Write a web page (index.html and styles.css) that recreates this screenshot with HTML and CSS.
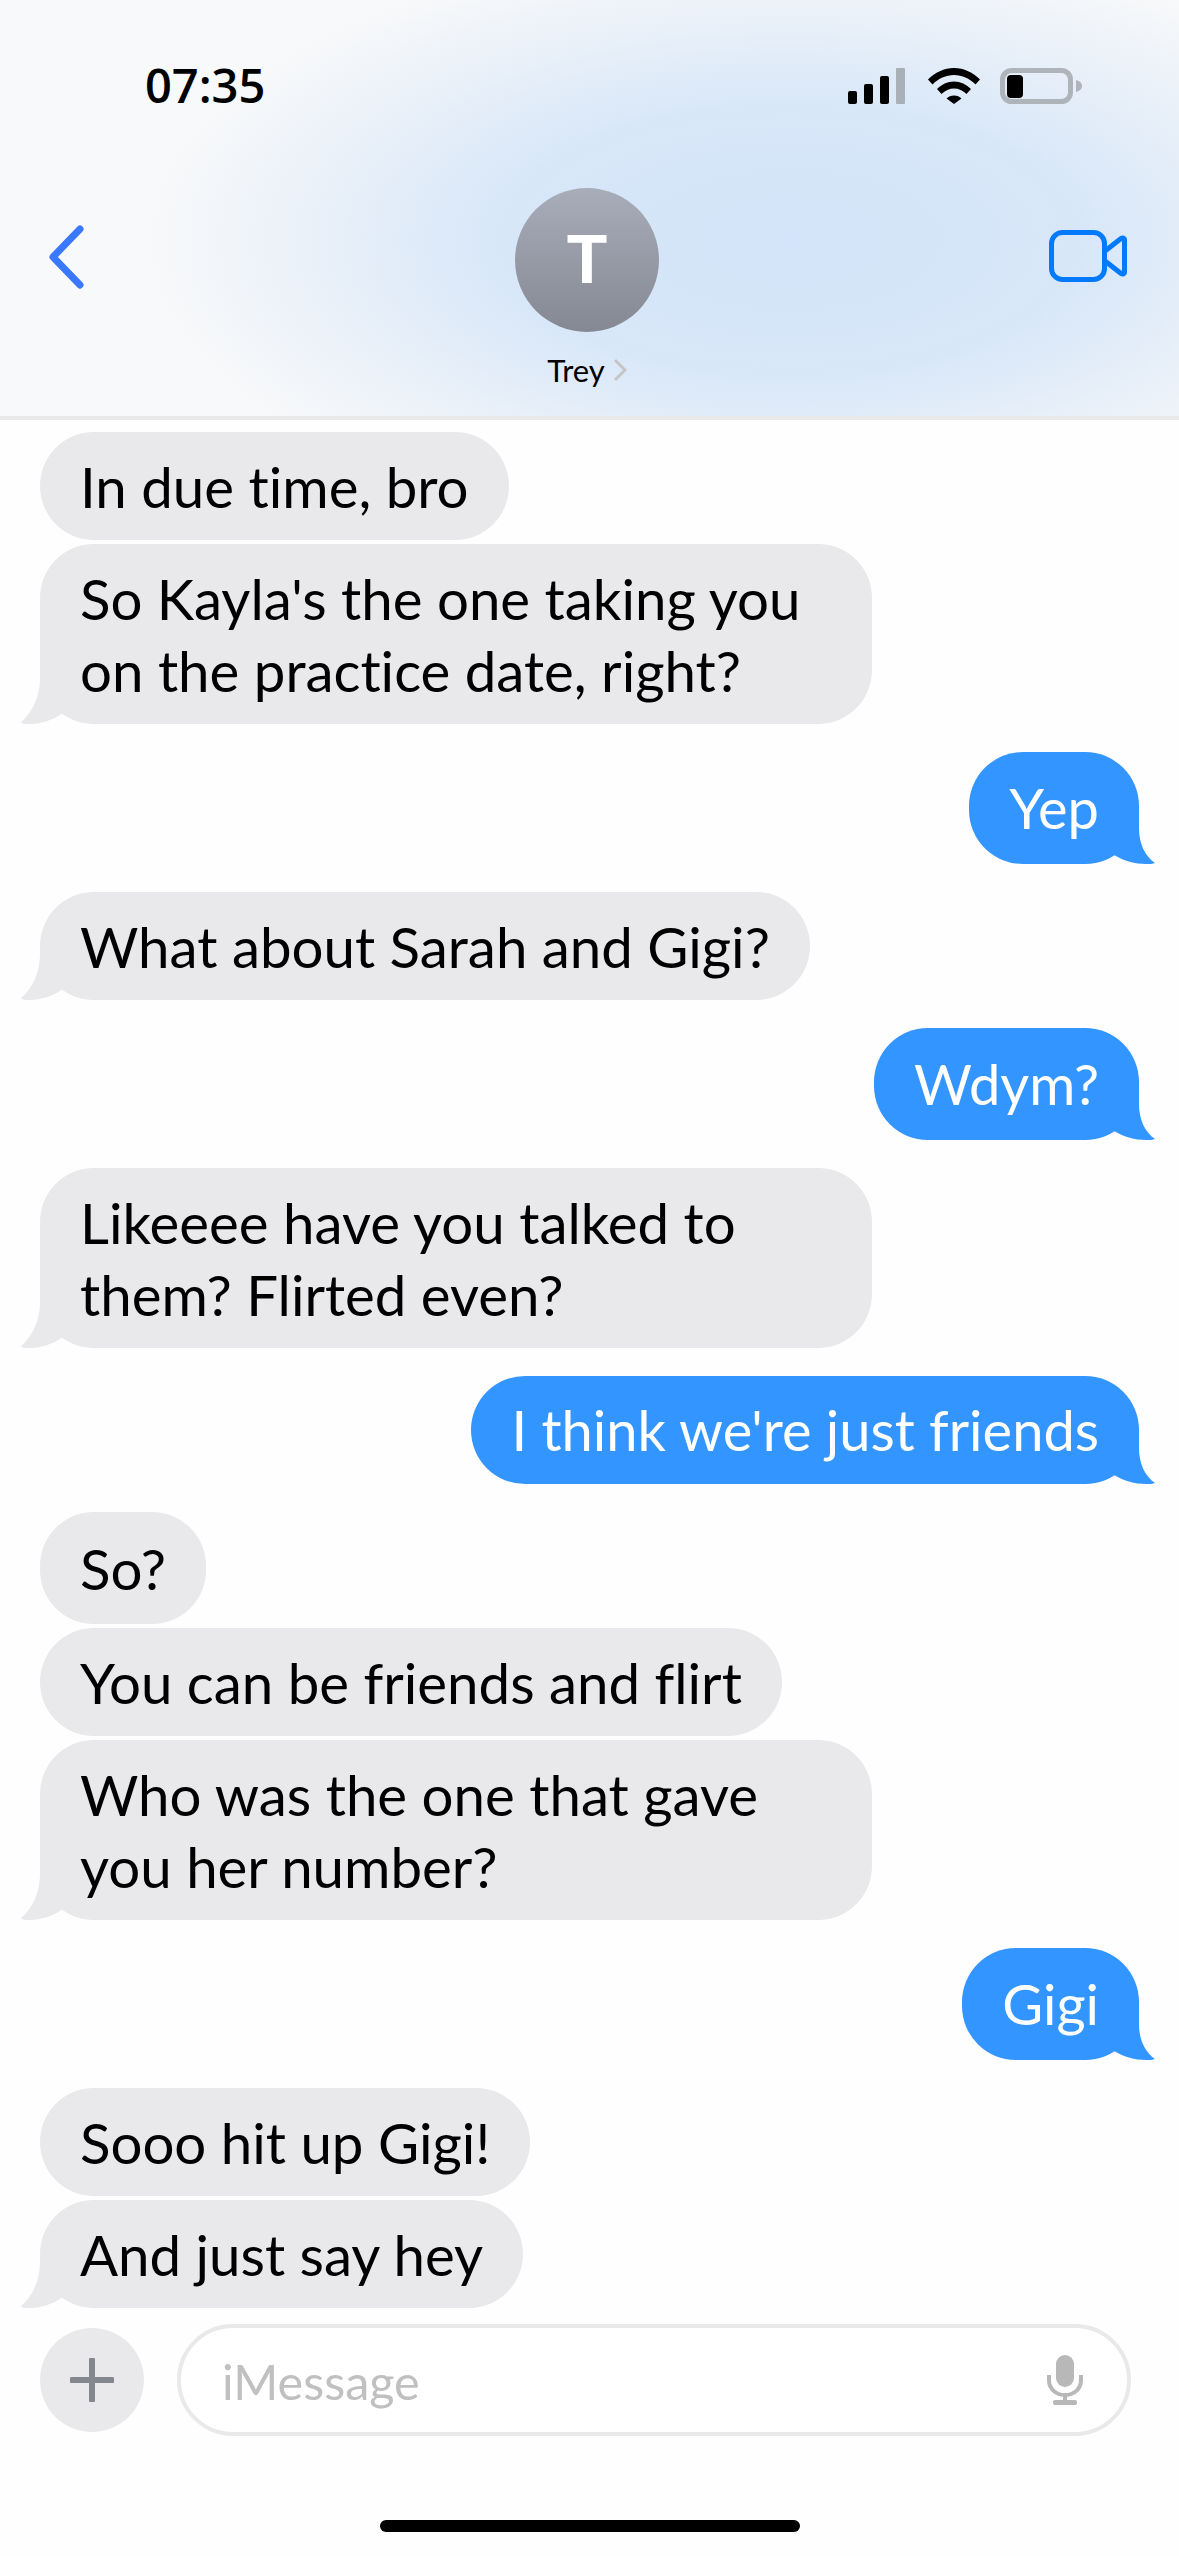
FILE: index.html
```html
<!doctype html>
<html lang="en">

<head>
    <meta charset="UTF-8" />
    <meta name="viewport" content="width=device-width, initial-scale=1.0" />
    <title>Trey</title>
    <link rel="stylesheet" href="styles.css">
</head>

<body>
    <header class="header">
        <div class="status">
            <span class="status__time">07:35</span>
            <div class="status__icons">
                <svg class="signal" width="58" height="36" viewBox="0 0 58 36">
                    <rect x="0" y="23" width="9" height="13" rx="2" />
                    <rect x="16" y="16" width="9" height="20" rx="2" />
                    <rect x="32" y="8" width="9" height="28" rx="2" />
                    <rect class="signal__off" x="48" y="0" width="9" height="36" rx="1" />
                </svg>
                <svg class="wifi" width="52" height="36" viewBox="0 0 52 36">
                    <path d="M0 11.5C7 4.500 16 0 26 0s19 4.500 26 11.500l-4.500 5C41.500 10.500 34 7 26 7S10.500 10.500 4.500 16.500Z" />
                    <path d="M9 21C13.500 16.500 19.500 13.500 26 13.500S38.500 16.500 43 21l-4.500 5C35 22.500 30.500 20.500 26 20.500S17 22.500 13.500 26Z" />
                    <path d="M18.500 30.500C20.500 28.500 23 27.500 26 27.500s5.500 1 7.500 3L26 36Z" />
                </svg>
                <svg class="battery" width="83" height="36" viewBox="0 0 83 36">
                    <rect class="battery__case" x="2.500" y="2.500" width="68" height="31" rx="9" />
                    <rect x="7" y="7" width="16" height="23" rx="4" />
                    <path class="battery__tip" d="M76 12c4 1 6 3 6 6s-2 5-6 6Z" />
                </svg>
            </div>
        </div>
        <nav class="nav">
            <svg class="nav__back" width="39" height="64" viewBox="0 0 39 64">
                <path d="M33 4 6 32l27 28" />
            </svg>
            <div class="contact">
                <div class="contact__avatar">T</div>
                <div class="contact__name">Trey
                    <svg class="contact__chevron" width="14" height="24" viewBox="0 0 14 24">
                        <path d="M2 2l10 10L2 22" />
                    </svg>
                </div>
            </div>
            <svg class="nav__video" width="78" height="52" viewBox="0 0 78 52">
                <rect x="2.500" y="2.500" width="53" height="47" rx="11" />
                <path d="M56 21 72 8.500c1.500-1 3.500-.5 3.500 1.500v32c0 2-2 2.500-3.500 1.500L56 31" />
            </svg>
        </nav>
    </header>

    <main class="thread">
        <div class="bubble">In due time, bro</div>
        <div class="bubble bubble--wide bubble--tail bubble--near">So Kayla's the one taking you<br>on the practice date, right?</div>
        <div class="bubble bubble--sent bubble--tall">Yep</div>
        <div class="bubble bubble--tail">What about Sarah and Gigi?</div>
        <div class="bubble bubble--sent bubble--tall">Wdym?</div>
        <div class="bubble bubble--wide bubble--tail">Likeeee have you talked to<br>them? Flirted even?</div>
        <div class="bubble bubble--sent">I think we're just friends</div>
        <div class="bubble bubble--tall">So?</div>
        <div class="bubble bubble--near">You can be friends and flirt</div>
        <div class="bubble bubble--wide bubble--tail bubble--near">Who was the one that gave<br>you her number?</div>
        <div class="bubble bubble--sent bubble--tall">Gigi</div>
        <div class="bubble">Sooo hit up Gigi!</div>
        <div class="bubble bubble--tail bubble--near">And just say hey</div>
    </main>

    <footer class="composer">
        <div class="composer__add">
            <svg width="44" height="44" viewBox="0 0 44 44">
                <path d="M22 2v40M2 22h40" />
            </svg>
        </div>
        <div class="composer__field">
            <span class="composer__placeholder">iMessage</span>
            <svg class="composer__mic" width="36" height="50" viewBox="0 0 36 50">
                <rect x="9" y="0" width="18" height="32" rx="9" />
                <path class="composer__mic-arc" d="M2 20v5c0 9 7 15 16 15s16-6 16-15v-5M18 40v6" />
                <rect x="6" y="45" width="24" height="5" rx="2" />
            </svg>
        </div>
    </footer>
    <div class="home-bar"></div>
</body>

</html>
```

FILE: styles.css
```css
:root {
    --bubble-gray: #e9e9eb;
    --bubble-blue: #3395ff;
    --ios-blue: #007aff;
    --line-gray: #e9e9ea;
}

* {
    margin: 0;
    padding: 0;
    box-sizing: border-box;
}

html,
body {
    height: 100%;
}

body {
    display: flex;
    flex-direction: column;
    background: #fefefe;
    color: #000;
    font-family: Lato, 'Open Sans', sans-serif;
    font-variant-ligatures: none;
    overflow: hidden;
}

.header {
    flex: none;
    height: 420px;
    border-bottom: 4px solid var(--line-gray);
    background: radial-gradient(ellipse 650px 300px at 790px 240px, #d2e4f9 0%, #d8e7f8 45%, #f0f4f9 85%, #f8f9fa 100%), #f8f9fa;
}

.status {
    display: flex;
    justify-content: space-between;
    align-items: center;
    height: 104px;
    padding: 67px 96px 0 145px;
}

.status__time {
    font-family: 'Open Sans', sans-serif;
    font-size: 47px;
    font-weight: 600;
    line-height: 37px;
}

.status__icons {
    display: flex;
    align-items: flex-start;
    gap: 22px;
}

.battery {
    margin-left: -2px;
}

.signal__off {
    fill: #a9b0b8;
}

.battery__case {
    fill: none;
    stroke: #aeb4ba;
    stroke-width: 5;
}

.battery__tip {
    fill: #aeb4ba;
}

.nav {
    display: grid;
    grid-template-columns: 1fr auto 1fr;
    align-items: start;
    padding: 84px 52px 0 47px;
}

.nav__back {
    margin-top: 37px;
    fill: none;
    stroke: #3a78ff;
    stroke-width: 7;
    stroke-linecap: round;
    stroke-linejoin: round;
}

.nav__video {
    justify-self: end;
    margin-top: 42px;
    fill: none;
    stroke: var(--ios-blue);
    stroke-width: 5;
    stroke-linejoin: round;
}

.contact {
    display: flex;
    flex-direction: column;
    align-items: center;
    gap: 20px;
}

.contact__avatar {
    display: flex;
    justify-content: center;
    align-items: center;
    width: 144px;
    height: 144px;
    border-radius: 50%;
    background: linear-gradient(#a8adba, #858892);
    color: #fff;
    font-family: Roboto, sans-serif;
    font-size: 67px;
    font-weight: 700;
}

.contact__name {
    display: flex;
    align-items: center;
    gap: 8px;
    height: 36px;
    font-size: 31px;
}

.contact__chevron {
    fill: none;
    stroke: #c5c5c7;
    stroke-width: 3;
}

.thread {
    flex: none;
    display: flex;
    flex-direction: column;
    align-items: flex-start;
    height: 1888px;
    padding: 12px 40px 0;
    overflow: hidden;
}

.bubble {
    position: relative;
    flex: none;
    margin-top: 28px;
    padding: 18px 40px;
    border-radius: 54px;
    background: var(--bubble-gray);
    font-size: 56.400px;
    line-height: 72px;
    white-space: nowrap;
}

.bubble:first-child,
.bubble--near {
    margin-top: 4px;
}

.bubble:first-child {
    margin-top: 0;
}

.bubble--wide {
    width: 832px;
}

.bubble--tall {
    padding-top: 20px;
    padding-bottom: 20px;
}

.bubble--tail::after,
.bubble--sent::after {
    content: '';
    position: absolute;
    bottom: 0;
    width: 44px;
    height: 56px;
    background: inherit;
}

.bubble--tail::after {
    left: -19px;
    clip-path: path('M19 0V10C19 30 10 46 0 54C1 56 5 56 9 56C20 56 32 52 42 45V0Z');
}

.bubble--sent {
    align-self: flex-end;
    background: var(--bubble-blue);
    color: #fff;
    font-size: 56px;
}

.bubble--sent::after {
    right: -16px;
    clip-path: path('M28 0V20C28 36 34 48 44 55C42 56 38 56 35 56C24 56 13 53 3 47V0Z');
}

.composer {
    flex: none;
    display: flex;
    align-items: center;
    gap: 33px;
    padding: 16px 48px 0 40px;
}

.composer__add {
    flex: none;
    display: flex;
    justify-content: center;
    align-items: center;
    width: 104px;
    height: 104px;
    border-radius: 50%;
    background: var(--bubble-gray);
}

.composer__add svg {
    fill: none;
    stroke: #85878f;
    stroke-width: 6;
    stroke-linecap: round;
}

.composer__field {
    flex: 1;
    display: flex;
    justify-content: space-between;
    align-items: center;
    height: 112px;
    padding: 2px 44px 0 41px;
    border: 4px solid var(--line-gray);
    border-radius: 56px;
    background: #fff;
}

.composer__placeholder {
    color: #c0c0c0;
    font-size: 48.500px;
}

.composer__mic {
    margin-top: -2px;
    fill: #b8b8b8;
}

.composer__mic-arc {
    fill: none;
    stroke: #b8b8b8;
    stroke-width: 4;
}

.home-bar {
    flex: none;
    align-self: center;
    width: 420px;
    height: 12px;
    margin-top: 84px;
    border-radius: 6px;
    background: #000;
}
```
